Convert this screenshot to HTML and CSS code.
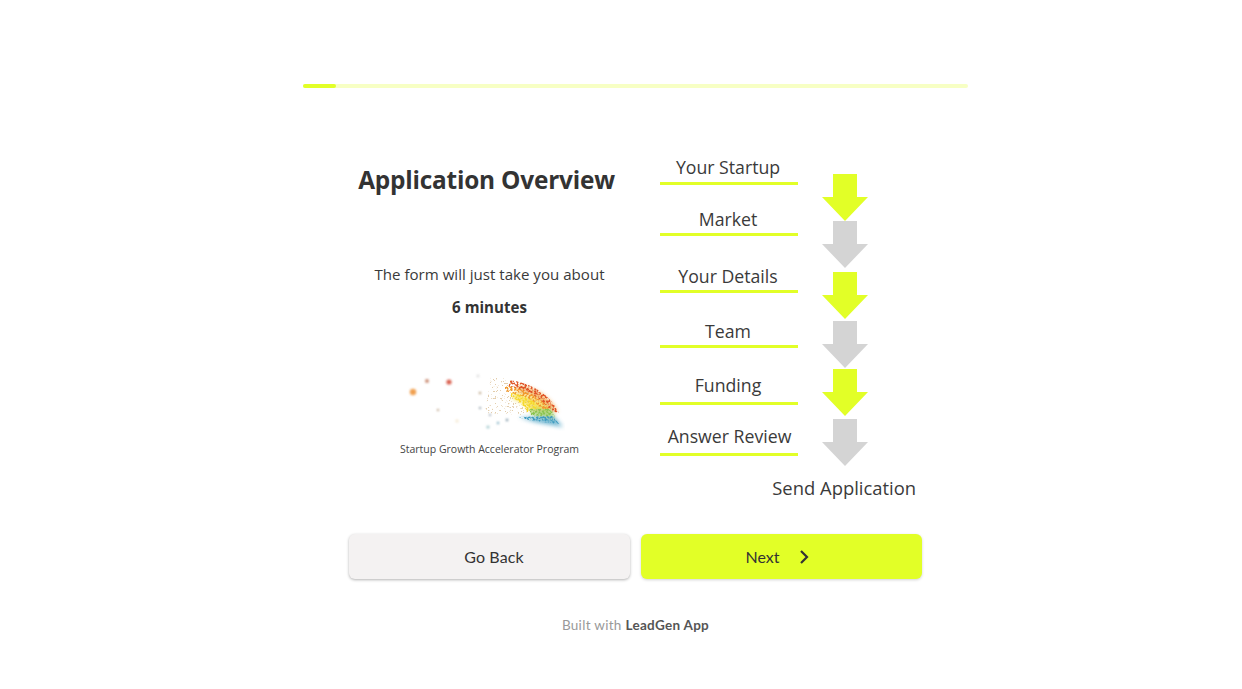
FILE: index.html
```html
<!DOCTYPE html>
<html lang="en">
<head>
<meta charset="utf-8">
<title>Application Overview</title>
<link rel="stylesheet" href="styles.css">
</head>
<body>
<main class="page">
  <div class="progress"><div class="progress-fill"></div></div>
  <section class="content">
    <div class="intro">
      <h1 class="title">Application Overview</h1>
      <p class="lead">The form will just take you about</p>
      <p class="time">6 minutes</p>
      <svg class="logo" viewBox="0 0 160 70" width="160" height="70" aria-hidden="true">
        <defs>
          <filter id="soft" x="-20%" y="-20%" width="140%" height="140%" color-interpolation-filters="sRGB"><feGaussianBlur stdDeviation="0.8"/></filter>
          <filter id="wash" x="-20%" y="-20%" width="140%" height="140%" color-interpolation-filters="sRGB"><feGaussianBlur stdDeviation="2.2"/></filter>
          <filter id="speckle" x="0" y="0" width="100%" height="100%" color-interpolation-filters="sRGB">
            <feTurbulence type="fractalNoise" baseFrequency="0.5" numOctaves="2" seed="4" result="noise"/>
            <feColorMatrix in="noise" type="matrix" values="0 0 0 0 0 0 0 0 0 0 0 0 0 0 0 0 0 0 12 -5.6" result="mask"/>
            <feComposite in="SourceGraphic" in2="mask" operator="in"/>
            <feGaussianBlur stdDeviation="0.4"/>
          </filter>
          <filter id="sparse" x="0" y="0" width="100%" height="100%" color-interpolation-filters="sRGB">
            <feTurbulence type="fractalNoise" baseFrequency="0.6" numOctaves="2" seed="9" result="noise"/>
            <feColorMatrix in="noise" type="matrix" values="0 0 0 0 0 0 0 0 0 0 0 0 0 0 0 0 0 0 16 -10" result="mask"/>
            <feComposite in="SourceGraphic" in2="mask" operator="in"/>
            <feGaussianBlur stdDeviation="0.4"/>
          </filter>
        </defs>
        <g filter="url(#wash)" opacity=".75">
          <path class="band-orange" d="M112 20Q140 24 153 47L143 43Q130 28 112 26Z"/>
          <path class="band-yellow" d="M108 28Q132 30 146 46L126 46Q118 36 108 34Z"/>
          <path class="band-green" d="M126 44H146L150 53L128 50Z"/>
          <path class="band-blue" d="M114 52L150 53L158 62L130 57Z"/>
        </g>
        <g filter="url(#sparse)" opacity=".7">
          <path class="band-tan" d="M86 12Q125 14 150 44L120 50L80 48Z"/>
        </g>
        <g filter="url(#speckle)">
          <path class="band-red" d="M104 15Q140 20 154 48L146 46Q132 28 104 22Z"/>
          <path class="band-orange" d="M100 20Q132 26 146 46L136 46Q124 32 100 26Z"/>
          <path class="band-yellow" d="M106 28Q130 32 138 47L122 47Q116 36 106 32Z"/>
          <path class="band-green" d="M124 44H146L150 52L126 50Z"/>
          <path class="band-blue" d="M112 52L148 51L154 59L128 56Z"/>
        </g>
        <g filter="url(#soft)">
          <circle cx="8" cy="27" r="3.2" fill="#f0a050"/>
          <circle cx="22" cy="16" r="1.9" fill="#c98a70"/>
          <circle cx="44" cy="17" r="2.6" fill="#d9604f"/>
          <circle cx="33" cy="45" r="1.1" fill="#b09070"/>
          <circle cx="75" cy="28" r="1.2" fill="#b8a080"/>
          <circle cx="75" cy="43" r="1" fill="#708090"/>
          <circle cx="85" cy="50" r="1" fill="#8090a0"/>
          <circle cx="83" cy="62" r="1.6" fill="#a8ccd0"/>
          <circle cx="93" cy="58" r="1.2" fill="#7eaec0"/>
          <circle cx="102" cy="55" r="1.2" fill="#708c9c"/>
          <circle cx="73" cy="11" r="1.4" fill="#ddd"/>
          <circle cx="52" cy="56" r="1.8" fill="#f6ecd8"/>
        </g>
      </svg>
      <p class="brand">Startup Growth Accelerator Program</p>
    </div>
    <div class="flow">
      <div class="steps">
        <div class="step">Your Startup</div>
        <div class="step">Market</div>
        <div class="step">Your Details</div>
        <div class="step">Team</div>
        <div class="step step-tall">Funding</div>
        <div class="step step-tall step-shift">Answer Review</div>
      </div>
      <div class="arrows">
        <svg class="arrow arrow-lime" viewBox="0 0 46 47" width="46" height="47" aria-hidden="true"><path d="M11 0H35V23H46L23 47L0 23H11Z"/></svg>
        <svg class="arrow arrow-grey" viewBox="0 0 46 47" width="46" height="47" aria-hidden="true"><path d="M11 0H35V23H46L23 47L0 23H11Z"/></svg>
        <svg class="arrow arrow-lime" viewBox="0 0 46 47" width="46" height="47" aria-hidden="true"><path d="M11 0H35V23H46L23 47L0 23H11Z"/></svg>
        <svg class="arrow arrow-grey" viewBox="0 0 46 47" width="46" height="47" aria-hidden="true"><path d="M11 0H35V23H46L23 47L0 23H11Z"/></svg>
        <svg class="arrow arrow-lime" viewBox="0 0 46 47" width="46" height="47" aria-hidden="true"><path d="M11 0H35V23H46L23 47L0 23H11Z"/></svg>
        <svg class="arrow arrow-grey" viewBox="0 0 46 47" width="46" height="47" aria-hidden="true"><path d="M11 0H35V23H46L23 47L0 23H11Z"/></svg>
      </div>
      <div class="send">Send Application</div>
    </div>
  </section>
  <div class="actions">
    <button class="btn btn-back" type="button">Go Back</button>
    <button class="btn btn-next" type="button">Next
      <svg class="chevron" viewBox="0 0 10 16" width="10" height="16" aria-hidden="true"><path d="M2 2L8 8L2 14" fill="none" stroke="#333" stroke-width="2.2"/></svg>
    </button>
  </div>
  <footer class="footer">Built with <strong>LeadGen App</strong></footer>
</main>
</body>
</html>
```

FILE: styles.css
```css
* { box-sizing: border-box; }
html, body { margin: 0; height: 100%; background: #fff; }
body { color: #333; font-family: "Open Sans", "Noto Sans", sans-serif; overflow: hidden; }

.page {
  width: 665px;
  margin-left: 303px;
  padding-top: 84px;
  display: flex;
  flex-direction: column;
}

.progress { height: 4px; background: #f7ffc4; border-radius: 2px; }
.progress-fill { width: 33px; height: 100%; background: #e2ff27; border-radius: 2px; }

.content {
  margin: 67px 46px 0;
  height: 379px;
  display: grid;
  grid-template-columns: 281px 281px;
  column-gap: 11px;
}

.intro { display: flex; flex-direction: column; align-items: center; }
.title { margin: 5px 6px 0 0; font-size: 24.4px; line-height: 40px; font-weight: 700; letter-spacing: -0.2px; white-space: nowrap; }
.lead { margin: 62px 0 0; font-size: 15.1px; line-height: 24px; font-weight: 400; color: #3a3a3a; }
.time { margin: 9px 0 0; font-size: 15.1px; line-height: 24px; font-weight: 700; }
.logo { display: block; margin: 46px 10px 0 0; }
.brand { margin: 6px 0 0; font-size: 10.5px; line-height: 16px; color: #444; }

.band-red { fill: #e0562a; }
.band-orange { fill: #f29a2e; }
.band-yellow { fill: #f6d92e; }
.band-green { fill: #8cc450; }
.band-blue { fill: #3f9cc0; }
.band-tan { fill: #d8b888; }

.flow {
  display: grid;
  grid-template-columns: 138px 46px 1fr;
  column-gap: 24px;
  padding: 0 0 0 19px;
  align-content: start;
}

.steps { display: flex; flex-direction: column; align-self: start; }
.step {
  height: 51px;
  flex: none;
  display: flex;
  align-items: flex-end;
  justify-content: center;
  border-bottom: 3px solid #e2ff27;
  color: #3a3a3a;
  font-size: 17.7px;
  line-height: 24px;
  padding: 0 2px 2px 0;
  white-space: nowrap;
}
.step:first-child { height: 30px; padding-bottom: 3px; }
.step:nth-child(3), .step:nth-child(5) { height: 57px; }
.step:nth-child(4) { height: 55px; }
.step-tall { padding-bottom: 5px; }
.step-shift { padding-left: 3px; }

.arrows { display: flex; flex-direction: column; align-items: flex-start; margin-top: 19px; }
.arrow { display: block; flex: none; }
.arrow-lime path { fill: #e2ff27; }
.arrow-grey path { fill: #d4d4d4; }
.arrow:nth-child(3) { margin-top: 4px; }
.arrow:nth-child(4) { margin-top: 2px; }
.arrow:nth-child(5) { margin-top: 1px; }
.arrow:nth-child(6) { margin-top: 3px; }

.send {
  grid-column: 1 / -1;
  justify-self: end;
  margin: 9px 6px 0 0;
  font-size: 18.4px;
  line-height: 26px;
  color: #3a3a3a;
  white-space: nowrap;
}

.actions {
  margin: 0 46px;
  display: grid;
  grid-template-columns: 281px 281px;
  column-gap: 11px;
}
.btn {
  height: 45px;
  border: 0;
  border-radius: 6px;
  font-family: "Lato", sans-serif;
  font-size: 16px;
  color: #333;
  display: flex;
  align-items: center;
  justify-content: center;
  box-shadow: 0 1px 3px rgba(0, 0, 0, .3);
}
.btn-back { background: #f4f2f2; padding-left: 15px; letter-spacing: .1px; }
.btn-next { background: #e2ff27; gap: 19px; box-shadow: 0 1px 3px rgba(0, 0, 0, .18); padding-right: 15px; }
.chevron { display: block; }

.footer {
  margin-top: 37px;
  text-align: center;
  font-family: "Lato", sans-serif;
  font-size: 13.5px;
  line-height: 18px;
  letter-spacing: .3px;
  color: #999;
}
.footer strong { color: #555; font-weight: 700; }
```
